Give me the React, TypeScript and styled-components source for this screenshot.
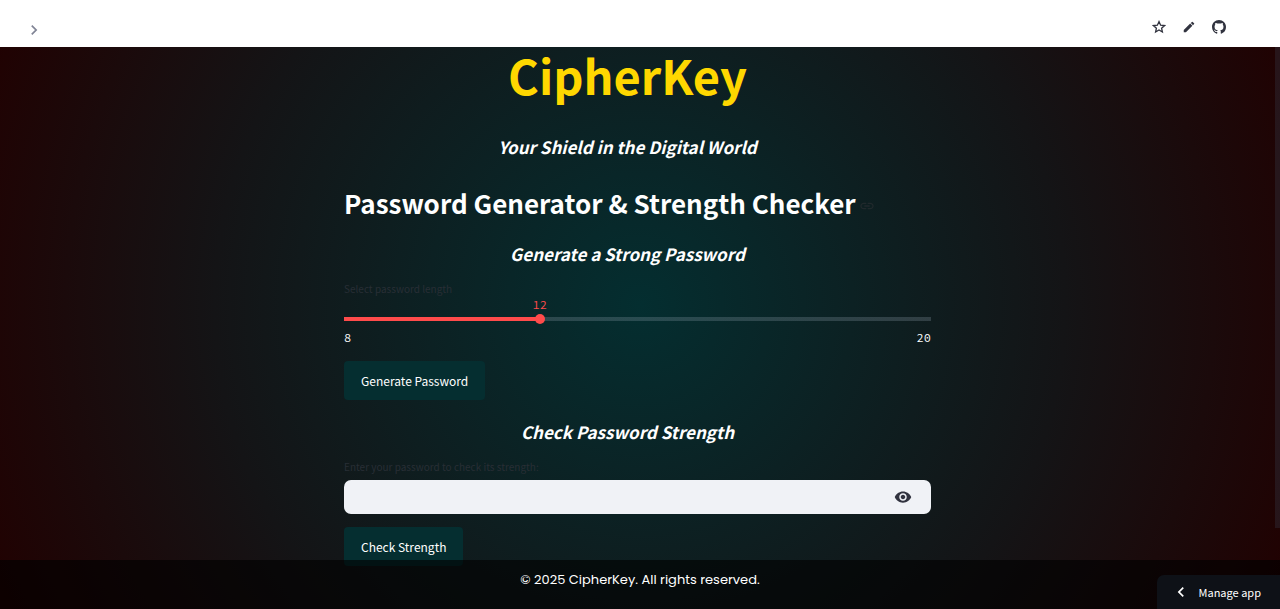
import React, { useState } from "react";
import styled, { createGlobalStyle } from "styled-components";
import { MdChevronRight, MdChevronLeft, MdEdit, MdLink, MdVisibility } from "react-icons/md";

const sans = `"Source Sans Pro", "Noto Sans CJK SC", "Open Sans", sans-serif`;

const GlobalStyle = createGlobalStyle`
  *, *::before, *::after { box-sizing: border-box; }
  body {
    margin: 0;
    font-family: ${sans};
    color: #ffffff;
    background: #000000;
  }
  h1, h2, h3, p { margin: 0; }
  button, input { font-family: inherit; }
`;

const Page = styled.div`
  position: relative;
  height: 100vh;
  display: flex;
  flex-direction: column;
  overflow: hidden;
  background: radial-gradient(circle at center, #042e30 0%, #141416 60%, #220000 102%);
`;

const Header = styled.header`
  flex: none;
  height: 47px;
  padding: 6px 52px 0 24px;
  display: flex;
  align-items: center;
  justify-content: space-between;
  background: #ffffff;
`;

const IconButton = styled.button<{ $color?: string }>`
  display: grid;
  place-items: center;
  padding: 0;
  border: 0;
  background: none;
  width: 18px;
  height: 18px;
  color: ${(p) => p.$color ?? "#31333f"};
  cursor: pointer;
`;

const SidebarToggle = styled(IconButton)`
  margin-top: 4px;
`;

const Tools = styled.div`
  display: flex;
  gap: 12px;
`;

const Main = styled.main`
  flex: 1;
  min-height: 0;
  padding-right: 5px;
`;

const Column = styled.div`
  width: 46%;
  min-width: 587px;
  max-width: 736px;
  margin: 0 auto;
  display: flex;
  flex-direction: column;
  align-items: stretch;
`;

const Title = styled.h1`
  padding-right: 20px;
  text-align: center;
  font-size: 47px;
  line-height: 56px;
  font-weight: 600;
  color: #ffd700;
`;

const Subtitle = styled.h3`
  padding-right: 20px;
  text-align: center;
  font-size: 17px;
  line-height: 24px;
  font-weight: 600;
  font-style: italic;
`;

const SectionTitle = styled.h2`
  display: flex;
  align-items: center;
  gap: 3px;
  font-size: 26px;
  line-height: 36px;
  font-weight: 600;
  white-space: nowrap;
`;

const Anchor = styled.a`
  display: flex;
  padding-top: 6px;
  color: #20292c;
`;

const Stack = styled.div<{ $top: number }>`
  margin-top: ${(p) => p.$top}px;
`;

const Label = styled.label`
  display: block;
  font-size: 10px;
  line-height: 16px;
  color: #282e35;
`;

const Slider = styled.div`
  position: relative;
  margin-top: 16px;
  height: 12px;
`;

const Range = styled.input<{ $percent: number }>`
  appearance: none;
  display: block;
  width: calc(100% + 10px);
  height: 12px;
  margin: 0 -5px;
  padding: 0 5px;
  background:
    linear-gradient(to right, #ff4b4b ${(p) => p.$percent}%, rgba(151, 166, 180, 0.25) ${(p) => p.$percent}%)
    center / 100% 4px no-repeat content-box;
  cursor: pointer;

  &::-webkit-slider-runnable-track {
    height: 12px;
    margin: 0 -5px;
  }

  &::-webkit-slider-thumb {
    appearance: none;
    width: 10px;
    height: 10px;
    margin-top: 1px;
    border-radius: 50%;
    background: #ff4b4b;
  }
`;

const Value = styled.output`
  position: absolute;
  bottom: 12px;
  transform: translateX(-50%);
  font: 12px/16px "Source Code Pro", "Liberation Mono", monospace;
  color: #ff4b4b;
`;

const Limits = styled.div`
  display: flex;
  justify-content: space-between;
  margin-top: 5px;
  font: 12px/16px "Source Code Pro", "Liberation Mono", monospace;
`;

const ActionButton = styled.button`
  display: block;
  height: 39px;
  padding: 0 17px;
  border: 0;
  border-radius: 4px;
  background: #052e30;
  color: #ffffff;
  font-size: 12px;
  line-height: 20px;
  cursor: pointer;
`;

const Field = styled.div`
  display: flex;
  align-items: center;
  height: 34px;
  margin-top: 5px;
  padding-right: 19px;
  border-radius: 7px;
  background: #f0f2f6;
`;

const PasswordInput = styled.input`
  flex: 1;
  min-width: 0;
  height: 100%;
  padding: 0 12px;
  border: 0;
  outline: 0;
  background: transparent;
  color: #31333f;
  font-size: 13px;
`;

const Footer = styled.footer`
  position: absolute;
  inset: auto 0 0 0;
  height: 49px;
  padding-top: 9px;
  text-align: center;
  background: rgba(0, 0, 0, 0.6);
  font: 13px/22px Poppins, Inter, sans-serif;
`;

const ManageButton = styled.button`
  position: absolute;
  right: 0;
  bottom: 0;
  display: flex;
  align-items: center;
  gap: 8px;
  height: 34px;
  padding: 0 19px 0 14px;
  border: 0;
  border-radius: 7px 0 0 0;
  background: #0e1117;
  color: #ffffff;
  font-size: 11px;
  line-height: 16px;
  cursor: pointer;
`;

const ScrollThumb = styled.div`
  position: absolute;
  top: 47px;
  right: 0;
  width: 5px;
  height: 79%;
  background: rgba(49, 51, 63, 0.4);
`;

const StarIcon = () => (
  <svg width="14" height="14" viewBox="0 0 14 14" fill="none" stroke="currentColor" strokeWidth="1.3" aria-hidden="true">
    <path d="M7 1.6 8.6 5.2 12.5 5.6 9.6 8.2 10.4 12 7 10 3.6 12 4.4 8.2 1.5 5.6 5.4 5.2Z" />
  </svg>
);

const GithubMark = () => (
  <svg width="14" height="14" viewBox="0 0 16 16" fill="currentColor" aria-hidden="true">
    <path d="M8 0C3.58 0 0 3.58 0 8c0 3.54 2.29 6.53 5.47 7.59.4.07.55-.17.55-.38 0-.19-.01-.82-.01-1.49-2.01.37-2.53-.49-2.69-.94-.09-.23-.48-.94-.82-1.13-.28-.15-.68-.52-.01-.53.63-.01 1.08.58 1.23.82.72 1.21 1.87.87 2.33.66.07-.52.28-.87.51-1.07-1.78-.2-3.64-.89-3.64-3.95 0-.87.31-1.59.82-2.15-.08-.2-.36-1.02.08-2.12 0 0 .67-.21 2.2.82.64-.18 1.32-.27 2-.27.68 0 1.36.09 2 .27 1.53-1.04 2.2-.82 2.2-.82.44 1.1.16 1.92.08 2.12.51.56.82 1.27.82 2.15 0 3.07-1.87 3.75-3.65 3.95.29.25.54.73.54 1.48 0 1.07-.01 1.93-.01 2.2 0 .21.15.46.55.38A8.013 8.013 0 0016 8c0-4.42-3.58-8-8-8z" />
  </svg>
);

export default function App() {
  const [length, setLength] = useState(12);
  const [password, setPassword] = useState("");
  const [visible, setVisible] = useState(false);
  const percent = ((length - 8) / 12) * 100;

  return (
    <Page>
      <GlobalStyle />
      <Header>
        <SidebarToggle aria-label="Open sidebar" $color="#808495">
          <MdChevronRight size={20} />
        </SidebarToggle>
        <Tools>
          <IconButton aria-label="Star"><StarIcon /></IconButton>
          <IconButton aria-label="Edit"><MdEdit size={14} /></IconButton>
          <IconButton aria-label="View on GitHub"><GithubMark /></IconButton>
        </Tools>
      </Header>
      <Main>
        <Column>
          <Title>CipherKey</Title>
          <Stack $top={32}><Subtitle>Your Shield in the Digital World</Subtitle></Stack>
          <Stack $top={26}>
            <SectionTitle id="generator">
              Password Generator &amp; Strength Checker
              <Anchor href="#generator" aria-label="Link to heading"><MdLink size={16} /></Anchor>
            </SectionTitle>
          </Stack>
          <Stack $top={21}><Subtitle>Generate a Strong Password</Subtitle></Stack>
          <Stack $top={15}>
            <Label htmlFor="length">Select password length</Label>
            <Slider>
              <Value htmlFor="length" style={{ left: `${percent}%` }}>{length}</Value>
              <Range
                id="length"
                type="range"
                min={8}
                max={20}
                value={length}
                $percent={percent}
                onChange={(e) => setLength(Number(e.target.value))}
              />
            </Slider>
            <Limits><span>8</span><span>20</span></Limits>
          </Stack>
          <Stack $top={15}><ActionButton>Generate Password</ActionButton></Stack>
          <Stack $top={20}><Subtitle>Check Password Strength</Subtitle></Stack>
          <Stack $top={15}>
            <Label htmlFor="password">Enter your password to check its strength:</Label>
            <Field>
              <PasswordInput
                id="password"
                type={visible ? "text" : "password"}
                value={password}
                onChange={(e) => setPassword(e.target.value)}
              />
              <IconButton aria-label="Show password" onClick={() => setVisible(!visible)}>
                <MdVisibility size={18} />
              </IconButton>
            </Field>
          </Stack>
          <Stack $top={13}><ActionButton>Check Strength</ActionButton></Stack>
        </Column>
      </Main>
      <ScrollThumb />
      <Footer>© 2025 CipherKey. All rights reserved.</Footer>
      <ManageButton><MdChevronLeft size={20} />Manage app</ManageButton>
    </Page>
  );
}
